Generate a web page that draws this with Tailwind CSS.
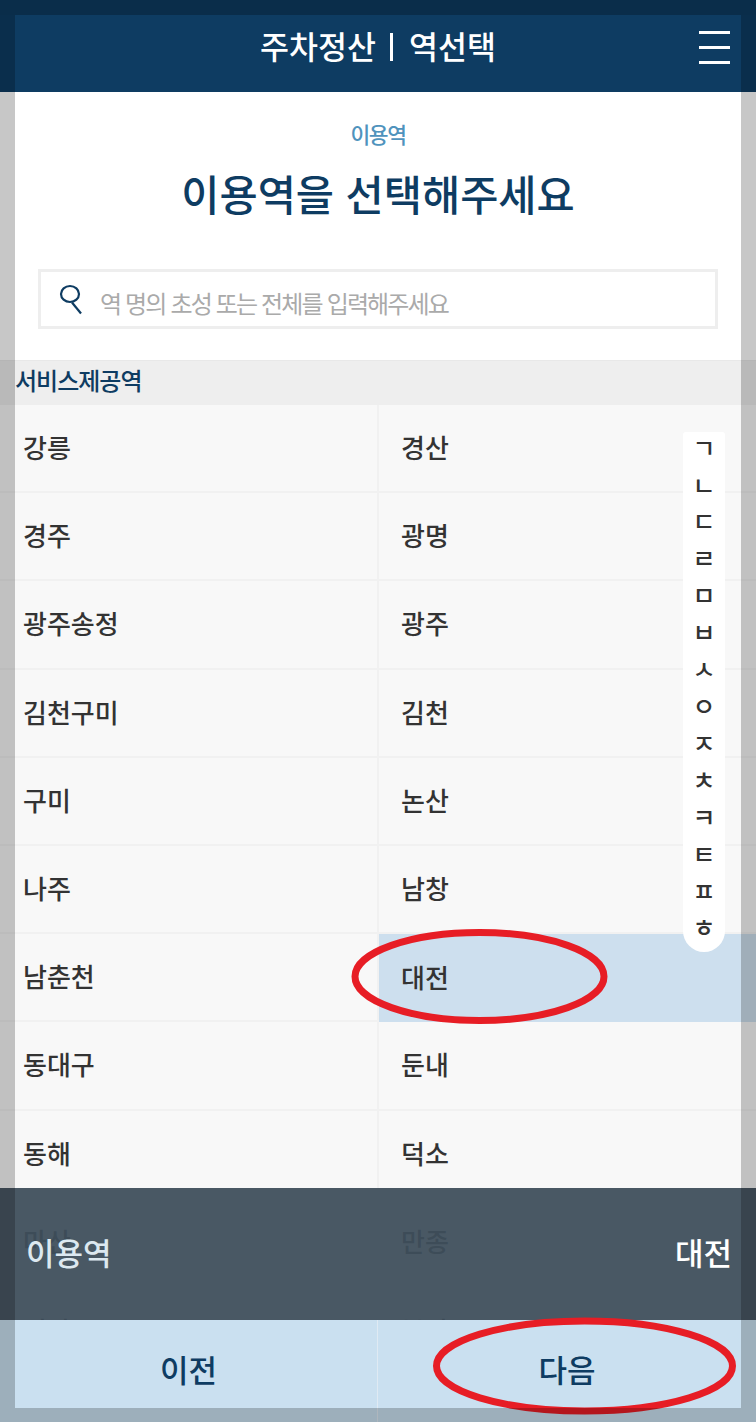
<!DOCTYPE html>
<html lang="ko">
<head>
    <meta charset="UTF-8">
    <meta name="viewport" content="width=device-width, initial-scale=1.0">
    <title>주차정산 | 역선택</title>
    <script src="https://cdn.jsdelivr.net/npm/@tailwindcss/browser@4"></script>
</head>
<body class="bg-white">
    <div class="relative w-[756px] h-[1422px] overflow-hidden bg-[#f8f8f8] font-['Noto_Sans_CJK_KR','Noto_Sans',sans-serif] text-[#333]">

        <!-- header -->
        <header class="relative h-[92px] bg-[#0e3c62] flex items-center justify-center text-white">
            <h1 class="flex items-center text-[31.5px] font-medium leading-none">
                <span>주차정산</span>
                <span class="w-[3px] h-[28px] ml-[14px] mr-[16px] mt-[1px] bg-white"></span>
                <span>역선택</span>
            </h1>
            <div class="absolute left-[699px] top-[31px] w-[31px] h-[33px] flex flex-col justify-between">
                <span class="block h-[3px] bg-white"></span>
                <span class="block h-[3px] bg-white"></span>
                <span class="block h-[3px] bg-white"></span>
            </div>
        </header>

        <!-- title + search -->
        <section class="h-[268px] bg-white flex flex-col items-center">
            <p class="mt-[28px] text-[21.5px] font-medium leading-[28px] tracking-[-1.5px] text-[#4f93bd]">이용역</p>
            <h2 class="mt-[18px] text-[41.5px] leading-[54px] font-medium text-[#0e3c62]">이용역을 선택해주세요</h2>
            <div class="mt-[49px] w-[680px] h-[60px] border-[3px] border-[#eeeeee] flex items-center pl-[18px] gap-[17px]">
                <svg class="w-[24px] h-[32px] shrink-0" viewBox="0 0 24 32" fill="none" stroke="#0e3c62" stroke-width="2.2">
                    <ellipse cx="11" cy="11" rx="9" ry="8"></ellipse>
                    <path d="M13 19.5 L22 30.5"></path>
                </svg>
                <input class="flex-1 pt-[8px] bg-transparent outline-none text-[24px] tracking-[-1.85px] placeholder:text-[#aaaaaa]" placeholder="역 명의 초성 또는 전체를 입력해주세요">
            </div>
        </section>

        <!-- station list -->
        <div class="h-[45px] pb-[7px] bg-[#eeeeee] border-t border-[#e8e8e8] pl-[15px] flex items-center text-[24px] font-medium tracking-[-1px] text-[#0e3c62]">서비스제공역</div>
        <div class="grid grid-cols-[379px_377px] auto-rows-[88.2px] text-[26px] font-medium">
            <div class="pl-[23px] pb-[3px] flex items-center border-b-2 border-r-2 border-[#f1f1f1]">강릉</div>
            <div class="pl-[22px] pb-[3px] flex items-center border-b-2 border-[#f1f1f1]">경산</div>
            <div class="pl-[23px] pb-[3px] flex items-center border-b-2 border-r-2 border-[#f1f1f1]">경주</div>
            <div class="pl-[22px] pb-[3px] flex items-center border-b-2 border-[#f1f1f1]">광명</div>
            <div class="pl-[23px] pb-[3px] flex items-center border-b-2 border-r-2 border-[#f1f1f1]">광주송정</div>
            <div class="pl-[22px] pb-[3px] flex items-center border-b-2 border-[#f1f1f1]">광주</div>
            <div class="pl-[23px] pb-[3px] flex items-center border-b-2 border-r-2 border-[#f1f1f1]">김천구미</div>
            <div class="pl-[22px] pb-[3px] flex items-center border-b-2 border-[#f1f1f1]">김천</div>
            <div class="pl-[23px] pb-[3px] flex items-center border-b-2 border-r-2 border-[#f1f1f1]">구미</div>
            <div class="pl-[22px] pb-[3px] flex items-center border-b-2 border-[#f1f1f1]">논산</div>
            <div class="pl-[23px] pb-[3px] flex items-center border-b-2 border-r-2 border-[#f1f1f1]">나주</div>
            <div class="pl-[22px] pb-[3px] flex items-center border-b-2 border-[#f1f1f1]">남창</div>
            <div class="pl-[23px] pb-[3px] flex items-center border-b-2 border-r-2 border-[#f1f1f1]">남춘천</div>
            <div class="pl-[22px] pb-[3px] flex items-center bg-[#cddfee]">대전</div>
            <div class="pl-[23px] pb-[3px] flex items-center border-b-2 border-r-2 border-[#f1f1f1]">동대구</div>
            <div class="pl-[22px] pb-[3px] flex items-center border-b-2 border-[#f1f1f1]">둔내</div>
            <div class="pl-[23px] pb-[3px] flex items-center border-b-2 border-r-2 border-[#f1f1f1]">동해</div>
            <div class="pl-[22px] pb-[3px] flex items-center border-b-2 border-[#f1f1f1]">덕소</div>
            <div class="pl-[23px] pb-[3px] flex items-center border-b-2 border-r-2 border-[#f1f1f1]">마산</div>
            <div class="pl-[22px] pb-[3px] flex items-center border-b-2 border-[#f1f1f1]">만종</div>
            <div class="pl-[23px] pb-[3px] flex items-center border-r-2 border-[#f1f1f1]">밀양</div>
            <div class="pl-[22px] pb-[3px] flex items-center">부산</div>
        </div>

        <!-- initial consonant index -->
        <div class="absolute left-[683px] top-[432px] w-[42px] h-[520px] pb-[10px] bg-white rounded-t-[3px] rounded-b-[21px] flex flex-col items-center justify-center text-[25px] font-medium leading-[36.9px]">
            <span>ㄱ</span><span>ㄴ</span><span>ㄷ</span><span>ㄹ</span><span>ㅁ</span><span>ㅂ</span><span>ㅅ</span><span>ㅇ</span><span>ㅈ</span><span>ㅊ</span><span>ㅋ</span><span>ㅌ</span><span>ㅍ</span><span>ㅎ</span>
        </div>

        <!-- bottom summary + buttons -->
        <div class="absolute left-0 bottom-0 w-full h-[234px]">
            <div class="h-[132px] pb-[4px] bg-[#3e4e5a]/94 pl-[26px] pr-[24px] flex items-center justify-between text-[31px] font-medium">
                <span class="text-[#dce8f0]">이용역</span>
                <span class="text-white">대전</span>
            </div>
            <div class="h-[102px] bg-[#cae0f0] grid grid-cols-2 text-[31px] font-medium text-[#0e3c62]">
                <div class="pb-[4px] flex items-center justify-center border-r border-[#dfeaf3]">이전</div>
                <div class="pb-[4px] flex items-center justify-center">다음</div>
            </div>
        </div>

        <!-- hand drawn red ovals -->
        <svg class="absolute left-0 top-0 w-[756px] h-[1422px] pointer-events-none" viewBox="0 0 756 1422" fill="none" stroke="#e71d25" stroke-width="7">
            <ellipse cx="479.5" cy="976.5" rx="124.5" ry="44"></ellipse>
            <ellipse cx="584.5" cy="1366" rx="148" ry="45"></ellipse>
        </svg>

        <!-- dimmed screen edges -->
        <div class="absolute left-0 top-0 w-full h-[15px] bg-black/24"></div>
        <div class="absolute left-0 top-[15px] w-[15px] h-[1393px] bg-black/22"></div>
        <div class="absolute right-0 top-[15px] w-[15px] h-[1393px] bg-black/22"></div>
        <div class="absolute left-0 bottom-0 w-full h-[14px] bg-black/22"></div>
    </div>
</body>
</html>
